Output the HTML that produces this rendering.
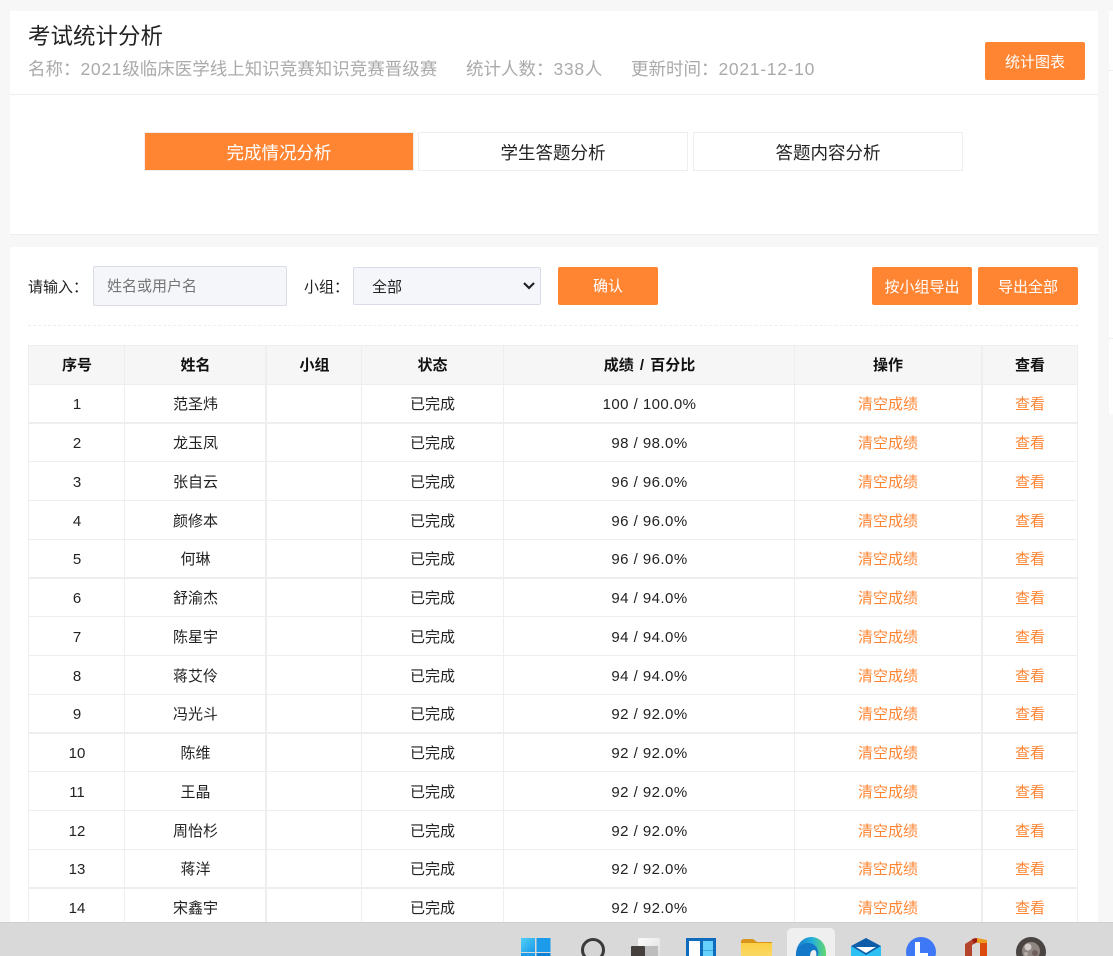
<!DOCTYPE html>
<html lang="zh-CN">
<head>
<meta charset="utf-8">
<title>考试统计分析</title>
<style>
html,body{margin:0;padding:0;width:1113px;height:956px;overflow:hidden;background:#f7f7f7;}
body{position:relative;font-family:"Liberation Sans","Noto Sans CJK SC",sans-serif;color:#222;font-size:15px;}
.a{position:absolute;}
.line{position:absolute;background:#eeeeee;}
.btn{position:absolute;background:#ff8533;color:#fff;border-radius:2px;text-align:center;font-size:15px;}
.tab{position:absolute;top:132px;height:37px;line-height:40px;border:1px solid #eeeeee;text-align:center;font-size:17.5px;color:#222;background:#fff;}
.sub{position:absolute;top:57px;font-size:17.5px;line-height:24px;color:#aaaaaa;white-space:nowrap;}
.sub b{font-weight:normal;letter-spacing:.7px;}
.r{position:absolute;left:28px;width:1050px;height:20px;line-height:20px;display:flex;text-align:center;color:#222;font-size:15px;}
.r span{display:block;flex:none;white-space:nowrap;}
.r span:nth-child(1){width:98px}
.r span:nth-child(2){width:139px}
.r span:nth-child(3){width:99px}
.r span:nth-child(4){width:137px}
.r span:nth-child(5){width:297px;letter-spacing:.45px}
.r span:nth-child(6){width:180px;color:#ff8533}
.r span:nth-child(7){width:104px;color:#ff8533}
.h{font-weight:bold;color:#111;}
.h span:nth-child(5){letter-spacing:0;word-spacing:2px}
.h span:nth-child(6),.h span:nth-child(7){color:#111}
</style>
</head>
<body>
<!-- right edge strip -->
<div class="a" style="left:1109px;top:11px;width:4px;height:403px;background:#fff;"></div>
<div class="line" style="left:1109px;top:70px;width:4px;height:1px;"></div>
<div class="line" style="left:1109px;top:338px;width:4px;height:1px;"></div>

<!-- top card -->
<div class="a" style="left:10px;top:11px;width:1088px;height:224px;background:#fff;"></div>
<div class="line" style="left:10px;top:94px;width:1088px;height:1px;"></div>
<div class="line" style="left:10px;top:234px;width:1088px;height:1px;"></div>
<div class="a" style="left:28px;top:22px;font-size:22.5px;line-height:30px;color:#222;white-space:nowrap;">考试统计分析</div>
<div class="sub" style="left:28px;">名称：<b>2021</b>级临床医学线上知识竞赛知识竞赛晋级赛</div>
<div class="sub" style="left:466px;">统计人数：<b>338</b>人</div>
<div class="sub" style="left:631px;">更新时间：<b>2021-12-10</b></div>
<div class="btn" style="left:985px;top:42px;width:100px;height:38px;line-height:41px;">统计图表</div>

<div class="tab" style="left:144px;width:268px;background:#ff8533;color:#fff;">完成情况分析</div>
<div class="tab" style="left:418px;width:268px;">学生答题分析</div>
<div class="tab" style="left:693px;width:268px;">答题内容分析</div>

<!-- bottom card -->
<div class="a" style="left:10px;top:247px;width:1088px;height:676px;background:#fff;"></div>
<div class="a" style="left:28px;top:278px;line-height:20px;white-space:nowrap;">请输入：</div>
<input class="a" placeholder="姓名或用户名" style="left:93px;top:266px;width:194px;height:40px;box-sizing:border-box;background:#f5f6fa;border:1px solid #d9dbe6;border-radius:2px;padding:0 13px;font:15px 'Liberation Sans','Noto Sans CJK SC',sans-serif;outline:none;">
<div class="a" style="left:304px;top:278px;line-height:20px;white-space:nowrap;">小组：</div>
<select class="a" style="left:353px;top:267px;width:188px;height:38px;box-sizing:border-box;background:#f5f6fa;border:1px solid #d9dbe6;border-radius:2px;padding:2px 18px 0;font:15px 'Liberation Sans','Noto Sans CJK SC',sans-serif;color:#222;outline:none;appearance:none;-webkit-appearance:none;"><option>全部</option></select>
<svg class="a" style="left:520px;top:280px;" width="18" height="12" viewBox="0 0 18 12"><path d="M4 3l5 5 5-5" fill="none" stroke="#222" stroke-width="2.200"/></svg>
<div class="btn" style="left:558px;top:267px;width:100px;height:38px;line-height:40px;">确认</div>
<div class="btn" style="left:872px;top:267px;width:100px;height:38px;line-height:41px;">按小组导出</div>
<div class="btn" style="left:978px;top:267px;width:100px;height:38px;line-height:41px;">导出全部</div>
<div class="a" style="left:28px;top:325px;width:1050px;height:0;border-top:1px dashed #eeeeee;"></div>

<!-- table -->
<div class="a" style="left:28px;top:345px;width:1050px;height:39px;background:#f6f6f6;"></div>
<div class="line" style="left:28px;top:345px;width:1050px;height:1px;"></div>
<div class="line" style="left:28px;top:384px;width:1050px;height:1px;"></div>
<div class="line" style="left:28px;top:422px;width:1050px;height:2px;"></div>
<div class="line" style="left:28px;top:461px;width:1050px;height:1px;"></div>
<div class="line" style="left:28px;top:500px;width:1050px;height:1px;"></div>
<div class="line" style="left:28px;top:539px;width:1050px;height:1px;"></div>
<div class="line" style="left:28px;top:577px;width:1050px;height:2px;"></div>
<div class="line" style="left:28px;top:616px;width:1050px;height:1px;"></div>
<div class="line" style="left:28px;top:655px;width:1050px;height:1px;"></div>
<div class="line" style="left:28px;top:694px;width:1050px;height:1px;"></div>
<div class="line" style="left:28px;top:732px;width:1050px;height:2px;"></div>
<div class="line" style="left:28px;top:771px;width:1050px;height:1px;"></div>
<div class="line" style="left:28px;top:810px;width:1050px;height:1px;"></div>
<div class="line" style="left:28px;top:849px;width:1050px;height:1px;"></div>
<div class="line" style="left:28px;top:887px;width:1050px;height:2px;"></div>
<div class="line" style="left:28px;top:345px;width:1px;height:577px;"></div>
<div class="line" style="left:124px;top:345px;width:1px;height:577px;"></div>
<div class="line" style="left:265px;top:345px;width:2px;height:577px;"></div>
<div class="line" style="left:361px;top:345px;width:1px;height:577px;"></div>
<div class="line" style="left:503px;top:345px;width:1px;height:577px;"></div>
<div class="line" style="left:794px;top:345px;width:1px;height:577px;"></div>
<div class="line" style="left:981px;top:345px;width:2px;height:577px;"></div>
<div class="line" style="left:1077px;top:345px;width:1px;height:577px;"></div>

<div class="r h" style="top:356px;"><span>序号</span><span>姓名</span><span>小组</span><span>状态</span><span>成绩 / 百分比</span><span>操作</span><span>查看</span></div>
<div class="r" style="top:395px;"><span>1</span><span>范圣炜</span><span></span><span>已完成</span><span>100 / 100.0%</span><span>清空成绩</span><span>查看</span></div>
<div class="r" style="top:434px;"><span>2</span><span>龙玉凤</span><span></span><span>已完成</span><span>98 / 98.0%</span><span>清空成绩</span><span>查看</span></div>
<div class="r" style="top:473px;"><span>3</span><span>张自云</span><span></span><span>已完成</span><span>96 / 96.0%</span><span>清空成绩</span><span>查看</span></div>
<div class="r" style="top:512px;"><span>4</span><span>颜修本</span><span></span><span>已完成</span><span>96 / 96.0%</span><span>清空成绩</span><span>查看</span></div>
<div class="r" style="top:550px;"><span>5</span><span>何琳</span><span></span><span>已完成</span><span>96 / 96.0%</span><span>清空成绩</span><span>查看</span></div>
<div class="r" style="top:589px;"><span>6</span><span>舒渝杰</span><span></span><span>已完成</span><span>94 / 94.0%</span><span>清空成绩</span><span>查看</span></div>
<div class="r" style="top:628px;"><span>7</span><span>陈星宇</span><span></span><span>已完成</span><span>94 / 94.0%</span><span>清空成绩</span><span>查看</span></div>
<div class="r" style="top:667px;"><span>8</span><span>蒋艾伶</span><span></span><span>已完成</span><span>94 / 94.0%</span><span>清空成绩</span><span>查看</span></div>
<div class="r" style="top:705px;"><span>9</span><span>冯光斗</span><span></span><span>已完成</span><span>92 / 92.0%</span><span>清空成绩</span><span>查看</span></div>
<div class="r" style="top:744px;"><span>10</span><span>陈维</span><span></span><span>已完成</span><span>92 / 92.0%</span><span>清空成绩</span><span>查看</span></div>
<div class="r" style="top:783px;"><span>11</span><span>王晶</span><span></span><span>已完成</span><span>92 / 92.0%</span><span>清空成绩</span><span>查看</span></div>
<div class="r" style="top:822px;"><span>12</span><span>周怡杉</span><span></span><span>已完成</span><span>92 / 92.0%</span><span>清空成绩</span><span>查看</span></div>
<div class="r" style="top:860px;"><span>13</span><span>蒋洋</span><span></span><span>已完成</span><span>92 / 92.0%</span><span>清空成绩</span><span>查看</span></div>
<div class="r" style="top:899px;"><span>14</span><span>宋鑫宇</span><span></span><span>已完成</span><span>92 / 92.0%</span><span>清空成绩</span><span>查看</span></div>

<!-- taskbar -->
<div class="a" style="left:0;top:922px;width:1113px;height:34px;background:#d9d9d9;border-top:1px solid #cfcfcf;box-sizing:border-box;"></div>
<div class="a" style="left:787px;top:928px;width:48px;height:28px;background:#efefef;border-radius:5px 5px 0 0;"></div>
<svg class="a" style="left:0;top:922px;" width="1113" height="34" viewBox="0 922 1113 34">
  <defs>
    <linearGradient id="w1" x1="0" y1="0" x2="1" y2="1"><stop offset="0" stop-color="#4fd0f8"/><stop offset="1" stop-color="#1a9ae8"/></linearGradient>
    <linearGradient id="f1" x1="0" y1="0" x2="0" y2="1"><stop offset="0" stop-color="#fbcf45"/><stop offset="1" stop-color="#fbd968"/></linearGradient>
    <linearGradient id="e1" x1="0" y1="0" x2="1" y2="0"><stop offset="0" stop-color="#1576c9"/><stop offset=".55" stop-color="#25b0d8"/><stop offset="1" stop-color="#63d96e"/></linearGradient>
    <linearGradient id="t1" x1="0" y1="0" x2="1" y2="1"><stop offset="0" stop-color="#fbfbfb"/><stop offset="1" stop-color="#dedede"/></linearGradient>
  </defs>
  <!-- windows -->
  <rect x="521" y="938" width="14" height="14" fill="url(#w1)"/>
  <rect x="536.500" y="938" width="14" height="14" fill="#1b9be9"/>
  <rect x="521" y="953" width="14" height="4" fill="#1d9ce9"/>
  <rect x="536.500" y="953" width="14" height="4" fill="#0f82d8"/>
  <!-- search -->
  <circle cx="593" cy="950" r="10.500" fill="#d5d5d5" stroke="#3a3a3a" stroke-width="3"/>
  <!-- task view -->
  <rect x="638" y="938" width="22" height="19" rx="2" fill="url(#t1)"/>
  <rect x="631" y="946" width="14" height="11" rx="1" fill="#453f3e"/>
  <rect x="645" y="946" width="13" height="11" fill="#bdbdbd"/>
  <!-- widgets -->
  <rect x="686" y="938" width="30" height="19" fill="#0f6cbd"/>
  <rect x="689" y="941" width="11" height="16" fill="#fdfdfd"/>
  <rect x="703" y="941" width="10" height="16" fill="#66d2fb"/>
  <rect x="703" y="950" width="10" height="1" fill="#3fa9dc"/>
  <!-- folder -->
  <path d="M741 942 q0-3 3-3h9l4 3h15v15h-31z" fill="#d8941b"/>
  <rect x="741" y="943" width="31" height="14" fill="url(#f1)"/>
  <!-- edge -->
  <path d="M796 957c-1-12 7-20 15-20 8 0 15 6 15 16v4z" fill="url(#e1)"/>
  <path d="M796 957c0-8 5-14 12-14 5 0 9 3 10 8 1 2 0 4-1 6z" fill="#1478c8"/>
  <path d="M810 957c0-4 1-7 4-7 2 0 3 3 2 7z" fill="#efefef"/>
  <!-- mail -->
  <path d="M851 946l15-8 15 8v11h-30z" fill="#0f5ca8"/>
  <path d="M856 947h20l-10 6z" fill="#ffffff"/>
  <path d="M851 946l15 9 15-9v11h-30z" fill="#2cc1f2"/>
  <!-- clock -->
  <circle cx="921" cy="952" r="15" fill="#3f78f6"/>
  <path d="M915 942h5v11h8v4h-13z" fill="#ffffff"/>
  <!-- office -->
  <path d="M980 942h7v15h-7z" fill="#dd4a0d"/>
  <path d="M965 957v-13l8-5 3 4-4 2v12z" fill="#b4452c"/>
  <path d="M972 939l4-1 3 1v3l-5 1z" fill="#9c1a10"/>
  <path d="M977 938l10 2v3h-10z" fill="#eb9a1e"/>
  <!-- avatar -->
  <circle cx="1031" cy="952" r="15" fill="#4a4543"/>
  <circle cx="1031" cy="951" r="9" fill="#8f8682"/>
  <circle cx="1028" cy="947" r="3.500" fill="#d4ccc8"/>
  <circle cx="1035" cy="953" r="3" fill="#6f605c"/>
  <circle cx="1026" cy="954" r="2" fill="#b5aaa6"/>
</svg>
</body>
</html>
